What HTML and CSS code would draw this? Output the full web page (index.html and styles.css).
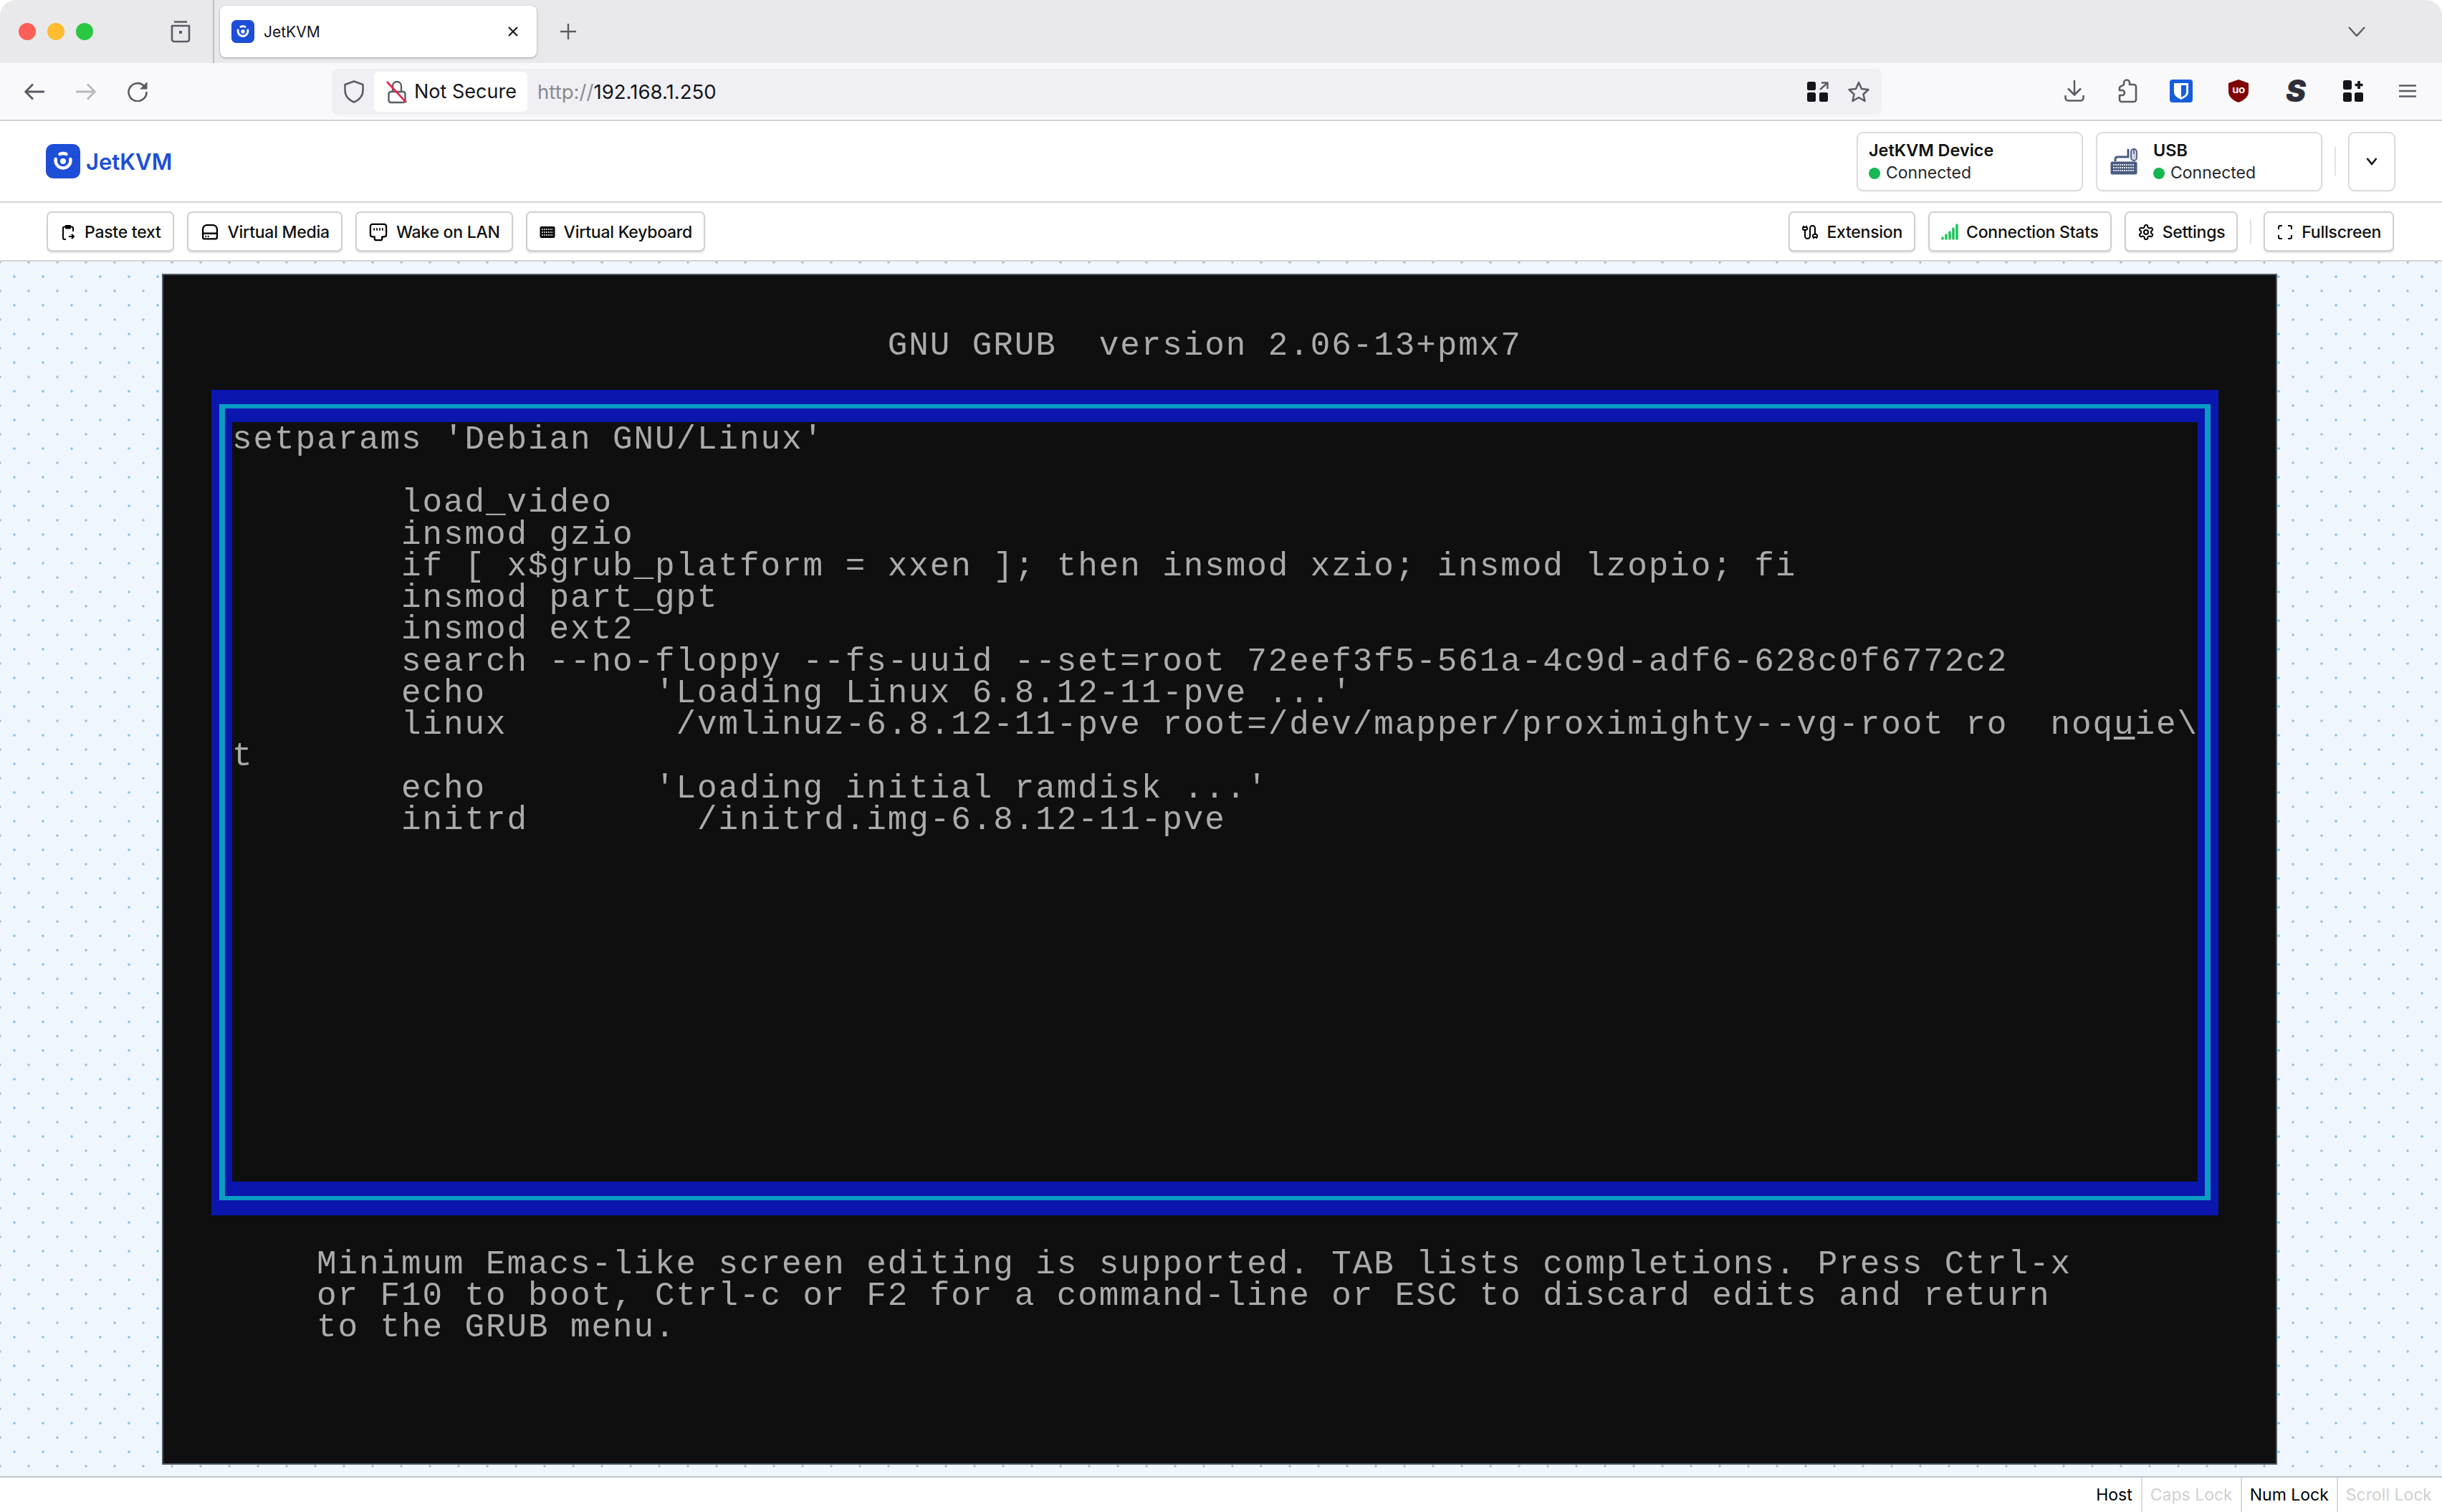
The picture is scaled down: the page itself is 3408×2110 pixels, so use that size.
FILE: index.html
```html
<!DOCTYPE html>
<html lang="en">
<head>
<meta charset="utf-8">
<title>JetKVM</title>
<link rel="stylesheet" href="styles.css">
</head>
<body>
<div class="window">
  <div class="tabbar">
    <div class="lights"><span class="light red"></span><span class="light amber"></span><span class="light green"></span></div>
    <svg class="sidebar-ico" viewBox="0 0 30 32" fill="none" stroke="#5b5b66" stroke-width="2.6"><path d="M6 2.5h18"/><path d="M3 8h24v19a3 3 0 0 1-3 3H6a3 3 0 0 1-3-3z" stroke-linejoin="round"/><rect x="13" y="15" width="4" height="4" fill="#5b5b66" stroke="none"/></svg>
    <div class="tabdiv"></div>
    <div class="tab">
      <svg class="favicon" viewBox="0 0 48 48"><rect width="48" height="48" rx="10" fill="#1d4ed8"/><path d="M13.7 21A10.5 10.5 0 1 0 34.3 21" fill="none" stroke="#fff" stroke-width="4.4" stroke-linecap="round"/><path d="M19.5 14A10.5 10.5 0 0 1 28.5 14" fill="none" stroke="#fff" stroke-width="4.4" stroke-linecap="round"/><circle cx="24" cy="24" r="4" fill="#fff"/></svg>
      <span class="tabtitle">JetKVM</span>
      <svg class="tabclose" viewBox="0 0 16 16" fill="none" stroke="#15141a" stroke-width="2"><path d="M2 2l12 12M14 2L2 14"/></svg>
    </div>
    <svg class="newtab" viewBox="0 0 24 24" fill="none" stroke="#5b5b66" stroke-width="2.4"><path d="M12 1v22M1 12h22"/></svg>
    <svg class="tabsmenu" viewBox="0 0 24 14" fill="none" stroke="#5b5b66" stroke-width="2.4"><path d="M1 1l11 12L23 1"/></svg>
  </div>

  <div class="navbar">
    <svg class="navico" viewBox="0 0 28 24" fill="none" stroke="#5b5b66" stroke-width="2.8"><path d="M28 12H2M12 1.500L1.800 12 12 22.500"/></svg>
    <svg class="navico dim" viewBox="0 0 28 24" fill="none" stroke="#b9b9bf" stroke-width="2.8"><path d="M0 12h26M16 1.500L26.200 12 16 22.500"/></svg>
    <svg class="navico" viewBox="0 0 28 28" fill="none" stroke="#5b5b66" stroke-width="2.6"><path d="M23.500 6.500A12.500 12.500 0 1 0 26.500 14"/><path d="M27.500 0v10.500H17z" fill="#5b5b66" stroke="none"/></svg>
    <div class="urlbar">
      <svg class="shield" viewBox="0 0 28 32" fill="none" stroke="#5b5b66" stroke-width="2.5"><path d="M14 1.500L26.500 6v8c0 8-5.500 13.500-12.500 16.500C7 27.500 1.500 22 1.500 14V6z" stroke-linejoin="round"/></svg>
      <div class="secure">
        <svg class="lock" viewBox="0 0 30 34" fill="none"><path d="M9 17v-8a6 6 0 0 1 12 0v8" stroke="#5b5b66" stroke-width="2.400"/><rect x="3.500" y="17" width="23" height="15" rx="3" stroke="#5b5b66" stroke-width="2.400"/><path d="M1 3l27 29" stroke="#e22850" stroke-width="2.600"/></svg>
        <span class="secure-text">Not Secure</span>
      </div>
      <span class="url"><span class="url-scheme">http://</span>192.168.1.250</span>
      <div class="url-icons">
        <svg class="qr" viewBox="0 0 30 28"><rect width="12" height="12" rx="2.500" fill="#15141a"/><rect y="15" width="12" height="13" rx="2.500" fill="#15141a"/><rect x="17" y="15" width="12" height="13" rx="2.500" fill="#15141a"/><path d="M18 11L28 2M20 1.500h8.500v8.500" fill="none" stroke="#5b5b66" stroke-width="2.400"/></svg>
        <svg class="star" viewBox="0 0 32 30" fill="none" stroke="#5b5b66" stroke-width="2.500"><path d="M16 2l4 9 9.500 1-7 6.500 2 9.500L16 23l-8.500 5 2-9.500-7-6.500L12 11z" stroke-linejoin="round"/></svg>
      </div>
    </div>
    <div class="actions">
      <svg class="act-a" viewBox="0 0 28 30" fill="none" stroke="#5b5b66" stroke-width="2.500"><path d="M14 0v20M5 11.500l9 9 9-9"/><path d="M1.500 21v4a3.500 3.500 0 0 0 3.500 3.500h18a3.500 3.500 0 0 0 3.500-3.500v-4"/></svg>
      <svg class="act-b" viewBox="0 0 28 34" fill="none" stroke="#5b5b66" stroke-width="2.600"><path d="M9 8V5.500a4 4 0 0 1 8 0V8h6a3 3 0 0 1 3 3v18a3 3 0 0 1-3 3H6a3 3 0 0 1-3-3v-6h3.500a3.500 3.500 0 0 0 0-7H3v-3a3 3 0 0 1 3-3z" stroke-linejoin="round"/></svg>
      <svg class="act-c" viewBox="0 0 32 32"><rect width="32" height="32" rx="4" fill="#175ddc"/><path d="M6 5h20v13c0 4.500-5 7.500-10 10-5-2.500-10-5.500-10-10z" fill="#fff"/><path d="M16 8h7v10c0 3-3.500 5-7 6.800z" fill="#175ddc"/></svg>
      <svg class="act-d" viewBox="0 0 28 32"><path d="M14 0l14 5v12c0 7-6 12-14 15C6 29 0 24 0 17V5z" fill="#800000"/><text x="14" y="19" class="ub-text">uo</text></svg>
      <span class="act-s">S</span>
      <svg class="act-e" viewBox="0 0 28 30"><rect width="12" height="13" rx="2.500" fill="#15141a"/><rect y="17" width="12" height="13" rx="2.500" fill="#15141a"/><rect x="16" y="17" width="12" height="13" rx="2.500" fill="#15141a"/><path d="M22 1v11M16.500 6.500h11" stroke="#15141a" stroke-width="3.600"/></svg>
      <svg class="act-f" viewBox="0 0 24 18" fill="none" stroke="#5b5b66" stroke-width="2.500"><path d="M0 1.500h24M0 9h24M0 16.500h24"/></svg>
    </div>
  </div>

  <header class="header">
    <div class="brand">
      <svg class="brand-mark" viewBox="0 0 48 48"><rect width="48" height="48" rx="10" fill="#1d4ed8"/><path d="M13.700 21A10.500 10.500 0 1 0 34.300 21" fill="none" stroke="#fff" stroke-width="4.400" stroke-linecap="round"/><path d="M19.500 14A10.500 10.500 0 0 1 28.500 14" fill="none" stroke="#fff" stroke-width="4.400" stroke-linecap="round"/><circle cx="24" cy="24" r="4" fill="#fff"/></svg>
      <span class="brand-name">JetKVM</span>
    </div>
    <div class="status-group">
      <div class="status-card">
        <div class="status-text">
          <span class="status-title">JetKVM Device</span>
          <span class="status-line"><i class="dot"></i>Connected</span>
        </div>
      </div>
      <div class="status-card usb">
        <svg class="usb-ico" viewBox="0 0 40 40"><path d="M8 20v-3a3 3 0 0 1 3-3h15V3" fill="none" stroke="#4a5a80" stroke-width="3"/><rect x="30" y="3" width="8" height="16" rx="4" fill="#cdd3e0" stroke="#4a5a80" stroke-width="1.800"/><path d="M34 3v7" stroke="#4a5a80" stroke-width="1.500"/><rect x="1.500" y="20.500" width="37" height="18" rx="2.500" fill="#4a5a80"/><path d="M5 25h30M5 29h30M5 33h30" stroke="#dfe4ee" stroke-width="2" stroke-dasharray="2 1"/></svg>
        <div class="status-text">
          <span class="status-title">USB</span>
          <span class="status-line"><i class="dot"></i>Connected</span>
        </div>
      </div>
      <div class="vdiv head-div"></div>
      <button class="chev-btn"><svg viewBox="0 0 16 12" fill="none" stroke="#15141a" stroke-width="2.600"><path d="M1.500 2L8 10l6.500-8"/></svg></button>
    </div>
  </header>

  <nav class="toolbar">
    <div class="tools">
      <button class="btn"><svg class="ico" viewBox="0 0 24 24"><path d="M9 3h6v3.500H9z" fill="#000" stroke="#000"/><path d="M9 4.500H7a2 2 0 0 0-2 2V20a2 2 0 0 0 2 2h2M15 4.500h2a2 2 0 0 1 2 2V11M13 18h7M17 15l3 3-3 3"/></svg>Paste text</button>
      <button class="btn"><svg class="ico ico-wide" viewBox="0 0 24 24"><path d="M3.500 14V8.500A5 5 0 0 1 8.500 3.500h7a5 5 0 0 1 5 5V14"/><path d="M3.500 13.500h17V18a2 2 0 0 1-2 2h-13a2 2 0 0 1-2-2z"/><path d="M7 17h.01M10 17h.01" stroke-linecap="round"/></svg>Virtual Media</button>
      <button class="btn"><svg class="ico ico-wide" viewBox="0 0 24 24"><path d="M5 2.500h14A2.500 2.500 0 0 1 21.500 5v10a2.500 2.500 0 0 1-2.500 2.500h-2.500V20a1.500 1.500 0 0 1-1.500 1.500H9A1.500 1.500 0 0 1 7.500 20v-2.500H5A2.500 2.500 0 0 1 2.500 15V5A2.500 2.500 0 0 1 5 2.500z"/><path d="M7 7v3M10.300 7v3M13.700 7v3M17 7v3" stroke-width="1.500"/></svg>Wake on LAN</button>
      <button class="btn"><svg class="ico" viewBox="0 0 24 24"><rect x="1.500" y="4" width="21" height="16" rx="2" fill="#000" stroke="none"/><path d="M4 8h16M4 12h16M4 16h16" stroke="#fff" stroke-width="1.500" stroke-dasharray="2 1"/></svg>Virtual Keyboard</button>
    </div>
    <div class="tools">
      <button class="btn"><svg class="ico" viewBox="0 0 24 24"><path d="M17 21v-2a1 1 0 0 1-1-1v-1a2 2 0 0 1 2-2h2a2 2 0 0 1 2 2v1a1 1 0 0 1-1 1M19 15V6.500a3.500 3.500 0 0 0-7 0v11a3.500 3.500 0 0 1-7 0V9M21 21v-2h-4M3 5h4V3M7 5a1 1 0 0 1 1 1v1a2 2 0 0 1-2 2H4a2 2 0 0 1-2-2V6a1 1 0 0 1 1-1V3"/></svg>Extension</button>
      <button class="btn"><svg class="ico ico-signal" viewBox="0 0 24 24"><path d="M2 20v1M7 16v5M12 12v9M17 7v14M22 2v19"/></svg>Connection Stats</button>
      <button class="btn"><svg class="ico" viewBox="0 0 24 24"><path d="M12.220 2h-.44a2 2 0 0 0-2 2v.18a2 2 0 0 1-1 1.730l-.43.25a2 2 0 0 1-2 0l-.15-.08a2 2 0 0 0-2.730.73l-.22.38a2 2 0 0 0 .73 2.730l.15.1a2 2 0 0 1 1 1.720v.51a2 2 0 0 1-1 1.740l-.15.09a2 2 0 0 0-.73 2.730l.22.38a2 2 0 0 0 2.730.73l.15-.08a2 2 0 0 1 2 0l.43.25a2 2 0 0 1 1 1.730V20a2 2 0 0 0 2 2h.44a2 2 0 0 0 2-2v-.18a2 2 0 0 1 1-1.730l.43-.25a2 2 0 0 1 2 0l.15.08a2 2 0 0 0 2.730-.73l.22-.39a2 2 0 0 0-.73-2.730l-.15-.08a2 2 0 0 1-1-1.740v-.5a2 2 0 0 1 1-1.740l.15-.09a2 2 0 0 0 .73-2.730l-.22-.38a2 2 0 0 0-2.730-.73l-.15.08a2 2 0 0 1-2 0l-.43-.25a2 2 0 0 1-1-1.730V4a2 2 0 0 0-2-2z"/><circle cx="12" cy="12" r="3"/></svg>Settings</button>
      <div class="vdiv tool-div"></div>
      <button class="btn"><svg class="ico" viewBox="0 0 24 24"><path d="M8 3H5a2 2 0 0 0-2 2v3M21 8V5a2 2 0 0 0-2-2h-3M3 16v3a2 2 0 0 0 2 2h3M16 21h3a2 2 0 0 0 2-2v-3"/></svg>Fullscreen</button>
    </div>
  </nav>

  <main class="stage">
    <div class="screen">
<pre class="grub title">                               GNU GRUB  version 2.06-13+pmx7</pre>
      <div class="frame">
        <div class="frame-line">
          <div class="frame-body">
<pre class="grub">setparams 'Debian GNU/Linux'

        load_video
        insmod gzio
        if [ x$grub_platform = xxen ]; then insmod xzio; insmod lzopio; fi
        insmod part_gpt
        insmod ext2
        search --no-floppy --fs-uuid --set=root 72eef3f5-561a-4c9d-adf6-628c0f6772c2
        echo        'Loading Linux 6.8.12-11-pve ...'
        linux        /vmlinuz-6.8.12-11-pve root=/dev/mapper/proximighty--vg-root ro  noq<span class="cursor">u</span>ie\
t
        echo        'Loading initial ramdisk ...'
        initrd        /initrd.img-6.8.12-11-pve</pre>
          </div>
        </div>
      </div>
<pre class="grub help">    Minimum Emacs-like screen editing is supported. TAB lists completions. Press Ctrl-x
    or F10 to boot, Ctrl-c or F2 for a command-line or ESC to discard edits and return
    to the GRUB menu.</pre>
    </div>
  </main>

  <footer class="statusbar">
    <span class="key key-host">Host</span>
    <span class="key off">Caps Lock</span>
    <span class="key">Num Lock</span>
    <span class="key off">Scroll Lock</span>
  </footer>
</div>
</body>
</html>
```
FILE: styles.css
```css
* { box-sizing: border-box; }
html, body { margin: 0; padding: 0; background: #fff; }
body { width: 3408px; height: 2110px; overflow: hidden; font-family: Inter, "Liberation Sans", sans-serif; color: #000; }
.window { width: 3408px; height: 2110px; display: flex; flex-direction: column; border-radius: 22px 22px 0 0; overflow: hidden; background: #fff; }

/* tab strip */
.tabbar { height: 88px; flex: none; background: #e9e9ec; display: flex; align-items: center; padding-left: 26px; }
.lights { display: flex; gap: 16px; }
.light { width: 24px; height: 24px; border-radius: 50%; }
.light.red { background: #ff5f57; }
.light.amber { background: #febc2e; }
.light.green { background: #28c840; }
.sidebar-ico { width: 30px; height: 32px; margin-left: 107px; }
.tabdiv { width: 2px; height: 88px; background: #c0c0c4; margin-left: 30px; }
.tab { width: 442px; height: 72px; margin-left: 8px; background: #fff; border-radius: 8px; box-shadow: 0 1px 3px rgba(0,0,0,.35); display: flex; align-items: center; padding: 0 25px 0 16px; }
.favicon { width: 32px; height: 32px; flex: none; }
.tabtitle { font-size: 21px; margin-left: 13px; flex: 1; color: #15141a; }
.tabclose { width: 16px; height: 16px; }
.newtab { width: 24px; height: 24px; margin-left: 32px; }
.tabsmenu { width: 24px; height: 14px; margin-left: auto; margin-right: 107px; }

/* nav bar */
.navbar { height: 81px; flex: none; background: #f9f9fb; border-bottom: 2px solid #d4d4d6; display: flex; align-items: center; padding-left: 34px; gap: 44px; }
.navico { width: 28px; height: 28px; flex: none; }
.urlbar { width: 2163px; height: 64px; margin-left: 213px; background: #f0f0f4; border-radius: 8px; display: flex; align-items: center; padding: 0 16px 0 17px; }
.shield { width: 28px; height: 32px; flex: none; }
.secure { margin-left: 14px; width: 214px; height: 56px; background: #fff; border-radius: 7px; display: flex; align-items: center; padding-left: 17px; }
.lock { width: 30px; height: 34px; flex: none; }
.secure-text { font-size: 27px; margin-left: 9px; color: #15141a; }
.url { font-size: 27.6px; margin-left: 14px; color: #15141a; }
.url-scheme { color: #8a8a90; }
.url-icons { margin-left: auto; display: flex; align-items: center; gap: 26px; }
.qr { width: 30px; height: 28px; }
.star { width: 32px; height: 30px; }
.actions { margin-left: auto; margin-right: 14px; display: grid; grid-template-columns: 74px 74px 76px 84px 76px 84px 68px; justify-items: center; align-items: center; margin-top: -2px; }
.act-a { width: 28px; height: 30px; }
.act-b { width: 28px; height: 34px; }
.act-c { width: 32px; height: 32px; }
.act-d { width: 28px; height: 32px; }
.ub-text { font: 700 15px "Liberation Sans", sans-serif; fill: #fff; text-anchor: middle; letter-spacing: -0.5px; }
.act-s { font: italic 900 42px/36px Inter, sans-serif; color: #2f2f3a; }
.act-e { width: 28px; height: 30px; }
.act-f { width: 24px; height: 18px; }

/* app header */
.header { height: 114px; flex: none; border-bottom: 2px solid #d4d4d8; display: flex; align-items: center; justify-content: space-between; padding: 0 65px 0 64px; background: #fff; }
.brand { display: flex; align-items: center; gap: 8px; }
.brand-mark { width: 48px; height: 48px; }
.brand-name { font-size: 31px; font-weight: 600; color: #1d4ed8; }
.status-group { display: flex; align-items: stretch; gap: 18px; height: 83px; }
.status-card { width: 316px; border: 2px solid #dcdce0; border-radius: 9px; box-shadow: 0 1px 2px rgba(0,0,0,.06); display: flex; align-items: center; padding-left: 15px; background: #fff; }
.status-card.usb { padding-left: 17px; }
.usb-ico { width: 40px; height: 40px; margin-right: 21px; flex: none; }
.status-text { display: flex; flex-direction: column; gap: 7px; padding-top: 1px; }
.status-title { font-size: 23.400px; line-height: 25px; font-weight: 600; color: #111; }
.status-line { font-size: 23px; line-height: 25px; color: #27272a; display: flex; align-items: center; gap: 8px; }
.dot { width: 16px; height: 16px; border-radius: 50%; background: #16b655; }
.vdiv { width: 2px; height: 40px; background: #e0e4ea; align-self: center; }
.head-div { margin: 0 -1px; }
.chev-btn { width: 66px; padding: 0; border: 2px solid #dcdce0; border-radius: 9px; background: #fff; display: flex; align-items: center; justify-content: center; box-shadow: 0 1px 2px rgba(0,0,0,.06); }
.chev-btn svg { width: 16px; height: 12px; }

/* toolbar */
.toolbar { height: 82px; flex: none; border-bottom: 2px solid #d4d4d8; background: #fff; display: flex; align-items: center; justify-content: space-between; padding: 0 67px 0 65px; }
.tools { display: flex; align-items: center; gap: 18px; }
.btn { height: 56px; padding: 2px 16px 0; background: #fff; border: 2px solid #d0d0d4; border-radius: 7px; box-shadow: 0 2px 2px rgba(0,0,0,.12); display: flex; align-items: center; gap: 11px; font: 500 23px Inter, sans-serif; letter-spacing: -0.25px; color: #111; }
.ico { width: 24px; height: 24px; flex: none; fill: none; stroke: #000; stroke-width: 2; stroke-linejoin: round; }
.ico-wide { width: 28px; height: 28px; }
.ico-signal { stroke: #22c55e; stroke-width: 3.600; stroke-linecap: round; }
.tool-div { height: 34px; margin: 0 -1px; }

/* canvas */
.stage { flex: 1; min-height: 0; display: flex; align-items: center; justify-content: center; padding-right: 4px; background-color: #f0f6fe; background-image: radial-gradient(circle at 20px 20px, #8fc8e8 1.500px, transparent 2px), radial-gradient(circle at 20px 20px, #b4c2cc 1.500px, transparent 2px); background-size: 40px 40px; background-position: 0 1px, -20px -19px; }
.screen { width: 2952px; height: 1662px; flex: none; background: #0f0f0f; border: 2px solid #4d5a68; padding: 77px 0 0 67px; }
.grub { margin: 0; font: 400 46px/44.250px "Liberation Mono", monospace; letter-spacing: 1.900px; color: #ababab; filter: blur(0.6px); white-space: pre; }
.title { margin-left: 29px; }
.frame { width: 2801px; height: 1152px; margin-top: 39px; background: #0a16ae; padding: 20px 11px 21px; }
.frame-line { height: 100%; border: solid #0b9cc4; border-width: 6px 8px; background: #0a16ae; padding: 19px 10px 20px; }
.frame-body { height: 100%; background: #0f0f0f; overflow: hidden; padding-top: 3px; }
.cursor { text-decoration: underline; text-underline-offset: 4px; }
.help { margin: 47px 0 0 29px; }

/* footer */
.statusbar { height: 50px; flex: none; border-top: 2px solid #c4c4c8; background: #fff; display: flex; justify-content: flex-end; padding-right: 3px; }
.key { font-size: 23px; display: flex; align-items: center; padding: 0 11px; color: #000; border-left: 2px solid #dcdcdf; }
.key-host { border-left: none; padding-right: 12px; }
.key.off { color: #cfd0d2; }
```
